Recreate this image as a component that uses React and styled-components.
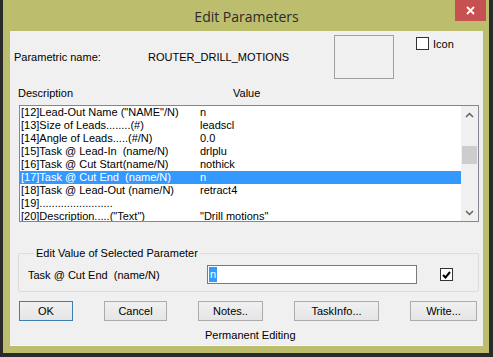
import React from 'react';
import styled, { createGlobalStyle } from 'styled-components';

const GlobalStyle = createGlobalStyle`
  html, body { margin: 0; padding: 0; background: #2a2a2a; }
  body { font-family: "Liberation Sans", Arial, sans-serif; font-size: 11px; color: #000; }
`;

const Frame = styled.div`
  width: 486px;
  height: 353px;
  margin-left: 3px;
  background: #bcbd6d;
  box-sizing: border-box;
  padding: 0 6px 7px 7px;
  display: flex;
  flex-direction: column;
`;

const TitleBar = styled.div`
  height: 31px;
  display: grid;
  grid-template-columns: 1fr auto 1fr;
`;

const Title = styled.div`
  grid-column: 2;
  align-self: center;
  font-family: "Open Sans", "Noto Sans", sans-serif;
  font-size: 14px;
  color: #2b2b2b;
  padding-top: 1px;
`;

const CloseButton = styled.div`
  grid-column: 3;
  justify-self: end;
  align-self: start;
  width: 31px;
  height: 21px;
  margin-right: -3px;
  background: #c75050;
  display: flex;
  align-items: center;
  justify-content: center;
`;

const Client = styled.div`
  flex: 1;
  background: #f0f0f0;
  display: flex;
  flex-direction: column;
  box-sizing: border-box;
  border-bottom: 1px solid #f8f8f8;
`;

const TopRow = styled.div`
  display: grid;
  grid-template-columns: 134px 186px 60px 22px auto;
  padding-left: 4px;
  padding-top: 4px;
  align-items: center;
`;

const IconBox = styled.div`
  width: 60px;
  height: 44px;
  box-sizing: border-box;
  border: 1px solid #a0a0a0;
  background: #f0f0f0;
`;

const IconCheck = styled.label`
  grid-column: 5;
  align-self: start;
  margin-top: 2px;
  display: flex;
  align-items: center;
  gap: 4px;
`;

const Box = styled.span`
  width: 13px;
  height: 13px;
  box-sizing: border-box;
  border: 1px solid #333;
  background: #fff;
  display: inline-flex;
  align-items: center;
  justify-content: center;
`;

const HeaderRow = styled.div`
  display: grid;
  grid-template-columns: 215px auto;
  padding-left: 8px;
  height: 13px;
  line-height: 13px;
  margin-top: 8px;
`;

const ListBox = styled.div`
  margin: 5px 0 0 9px;
  width: 460px;
  height: 117px;
  box-sizing: border-box;
  border: 1px solid #828790;
  background: #fff;
  display: flex;
  overflow: hidden;
`;

const Rows = styled.div`
  flex: 1;
  display: flex;
  flex-direction: column;
`;

const Row = styled.div`
  flex: 0 0 13px;
  height: 13px;
  line-height: 13px;
  display: grid;
  grid-template-columns: 179px auto;
  padding-left: 1px;
  white-space: pre;
  background: ${(p) => (p.$selected ? '#3399ff' : 'transparent')};
  color: ${(p) => (p.$selected ? '#fff' : '#000')};
`;

const ScrollBar = styled.div`
  width: 17px;
  background: #f0f0f0;
  display: flex;
  flex-direction: column;
  align-items: center;
`;

const Arrow = styled.div`
  height: 17px;
  width: 17px;
  display: flex;
  align-items: center;
  justify-content: center;
`;

const Thumb = styled.div`
  width: 15px;
  height: 18px;
  margin-top: 23px;
  background: #cdcdcd;
`;

const Spacer = styled.div`
  flex: 1;
`;

const Group = styled.fieldset`
  margin: 25px 0 0 8px;
  width: 461px;
  box-sizing: border-box;
  border: 1px solid #dcdcdc;
  border-radius: 2px;
  padding: 0 0 0 8px;
  height: 45px;
  display: flex;
  align-items: center;
`;

const Legend = styled.legend`
  padding: 0 2px;
  margin-left: 7px;
  font-size: 11px;
  line-height: 13px;
`;

const FieldLabel = styled.div`
  width: 179px;
  padding-left: 1px;
  margin-top: 5px;
  white-space: pre;
`;

const ValueInput = styled.div`
  width: 210px;
  height: 19px;
  box-sizing: border-box;
  border: 1px solid #7a7a7a;
  background: #fff;
  display: flex;
  align-items: center;
  padding-left: 1px;
  margin-top: 5px;
`;

const SelText = styled.span`
  background: #3399ff;
  color: #fff;
  padding: 0 1px;
  line-height: 15px;
`;

const CheckCell = styled.div`
  margin: 5px 0 0 23px;
`;

const ButtonRow = styled.div`
  display: flex;
  gap: 31px;
  padding-left: 9px;
  margin-top: 9px;
`;

const Button = styled.div`
  width: ${(p) => p.$w}px;
  height: 20px;
  box-sizing: border-box;
  border: 1px solid ${(p) => (p.$default ? '#3c7fb1' : '#acacac')};
  background: linear-gradient(#f0f0f0, #e5e5e5);
  display: flex;
  align-items: center;
  justify-content: center;
  font-size: 11px;
`;

const Footer = styled.div`
  margin-top: 8px;
  padding-left: 195px;
  line-height: 13px;
`;

const rows = [
  ['[12]Lead-Out Name ("NAME"/N)', 'n'],
  ['[13]Size of Leads........(#)', 'leadscl'],
  ['[14]Angle of Leads.....(#/N)', '0.0'],
  ['[15]Task @ Lead-In  (name/N)', 'drlplu'],
  ['[16]Task @ Cut Start(name/N)', 'nothick'],
  ['[17]Task @ Cut End  (name/N)', 'n'],
  ['[18]Task @ Lead-Out (name/N)', 'retract4'],
  ['[19]........................', ''],
  ['[20]Description.....("Text")', '"Drill motions"'],
];

const buttons = [
  { label: 'OK', w: 54, def: true },
  { label: 'Cancel', w: 63 },
  { label: 'Notes..', w: 65 },
  { label: 'TaskInfo...', w: 85 },
  { label: 'Write...', w: 67 },
];

function Chevron({ up }) {
  return (
    <svg width="9" height="6" viewBox="0 0 9 6">
      <path
        d={up ? 'M1 5 L4.5 1.5 L8 5' : 'M1 1 L4.5 4.5 L8 1'}
        fill="none"
        stroke="#606060"
        strokeWidth="1.5"
      />
    </svg>
  );
}

export default function App() {
  return (
    <>
      <GlobalStyle />
      <Frame>
        <TitleBar>
          <Title>Edit Parameters</Title>
          <CloseButton>
            <svg width="9" height="9" viewBox="0 0 9 9">
              <path d="M1 1 L8 8 M8 1 L1 8" stroke="#fff" strokeWidth="1.8" />
            </svg>
          </CloseButton>
        </TitleBar>
        <Client>
          <TopRow>
            <span>Parametric name:</span>
            <span>ROUTER_DRILL_MOTIONS</span>
            <IconBox />
            <IconCheck>
              <Box />
              <span>Icon</span>
            </IconCheck>
          </TopRow>
          <HeaderRow>
            <span>Description</span>
            <span>Value</span>
          </HeaderRow>
          <ListBox>
            <Rows>
              {rows.map(([d, v], i) => (
                <Row key={i} $selected={i === 5}>
                  <span>{d}</span>
                  <span>{v}</span>
                </Row>
              ))}
            </Rows>
            <ScrollBar>
              <Arrow><Chevron up /></Arrow>
              <Thumb />
              <Spacer />
              <Arrow><Chevron /></Arrow>
            </ScrollBar>
          </ListBox>
          <Group>
            <Legend>Edit Value of Selected Parameter</Legend>
            <FieldLabel>Task @ Cut End  (name/N)</FieldLabel>
            <ValueInput>
              <SelText>n</SelText>
            </ValueInput>
            <CheckCell>
              <Box>
                <svg width="9" height="8" viewBox="0 0 9 8">
                  <path d="M1 4 L3.5 6.5 L8 1" fill="none" stroke="#000" strokeWidth="2" />
                </svg>
              </Box>
            </CheckCell>
          </Group>
          <ButtonRow>
            {buttons.map((b) => (
              <Button key={b.label} $w={b.w} $default={b.def}>{b.label}</Button>
            ))}
          </ButtonRow>
          <Footer>Permanent Editing</Footer>
        </Client>
      </Frame>
    </>
  );
}
